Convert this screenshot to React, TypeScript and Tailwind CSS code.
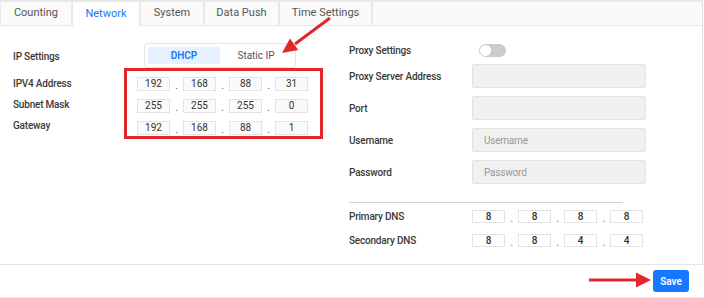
import { useState } from 'react';

type Tab = { name: string; w: string };

const tabs: Tab[] = [
  { name: 'Counting', w: 'w-[70px]' },
  { name: 'Network', w: 'w-[66px]' },
  { name: 'System', w: 'w-[62px]' },
  { name: 'Data Push', w: 'w-[73px]' },
  { name: 'Time Settings', w: 'w-[91px]' },
];

function IpFields({ parts, white }: { parts: string[]; white?: boolean }) {
  return (
    <div className="flex items-center">
      {parts.map((p, i) => (
        <div key={i} className="flex items-center">
          {i > 0 && (
            <span
              className={`w-[13px] h-full flex items-end justify-center pt-[5px] text-[10px] leading-none ${
                white ? 'text-[#5b9bd5]' : 'text-[#555]'
              }`}
            >
              .
            </span>
          )}
          <div
            className={`w-[33px] flex items-center justify-center border border-[#e3e3e3] text-[10px] text-[#333] leading-none ${
              white ? 'h-[13px] bg-white' : 'h-[14px] bg-[#fafafa]'
            }`}
          >
            {p}
          </div>
        </div>
      ))}
    </div>
  );
}

function TextBox({ placeholder }: { placeholder?: string }) {
  return (
    <div className="w-[174px] h-[24px] bg-[#f0f0f0] border border-[#e2e2e2] rounded-[2px] flex items-center pl-[11px] text-[10px] font-normal text-[#999]">
      {placeholder}
    </div>
  );
}

export default function App() {
  const [active, setActive] = useState('Network');
  const [mode, setMode] = useState<'dhcp' | 'static'>('dhcp');

  return (
    <div className="relative w-[704px] h-[298px] bg-white flex flex-col font-['Roboto',sans-serif] text-[#333]">
      <div className="w-[703px] h-[265px] border-r border-b border-[#e4e4e4] flex flex-col">
        {/* tabs */}
        <div className="h-[26px] shrink-0 bg-[#e8e8e8] pt-[2px] pl-px flex items-start gap-[2px]">
          {tabs.map((t) => (
            <button
              key={t.name}
              onClick={() => setActive(t.name)}
              className={`${t.w} flex items-center justify-center text-[11px] ${
                active === t.name ? 'h-[24px] bg-white text-[#1677ff]' : 'h-[23px] bg-[#fafafa] text-[#555]'
              }`}
            >
              {t.name}
            </button>
          ))}
          <div className="flex-1 h-[23px] bg-[#fafafa]" />
        </div>

        {/* body */}
        <div className="flex flex-1">
          <div className="w-[336px] pl-[13px] pt-[17px]">
            <div className="flex items-center h-[24px]">
              <span className="w-[131px] text-[10px] font-medium tracking-[-0.2px] text-[#3a3a3a] pt-[2px]">IP Settings</span>
              <div className="flex p-[3px] border border-[#e6e6e6] rounded-[3px]">
                <button
                  onClick={() => setMode('dhcp')}
                  className={`w-[72px] h-[17px] rounded-[2px] text-[10px] font-semibold ${
                    mode === 'dhcp' ? 'bg-[#e6f0ff] text-[#1677ff]' : 'text-[#555]'
                  }`}
                >
                  DHCP
                </button>
                <button
                  onClick={() => setMode('static')}
                  className={`w-[72px] h-[17px] rounded-[2px] text-[10px] ${
                    mode === 'static' ? 'bg-[#e6f0ff] text-[#1677ff] font-semibold' : 'text-[#555]'
                  }`}
                >
                  Static IP
                </button>
              </div>
            </div>

            <div className="flex mt-[1px]">
              <div className="w-[111px] pt-[8px] flex flex-col gap-[7px] text-[10px] font-medium tracking-[-0.2px] text-[#3a3a3a]">
                <span className="h-[14px] flex items-center">IPV4 Address</span>
                <span className="h-[14px] flex items-center">Subnet Mask</span>
                <span className="h-[15px] flex items-center">Gateway</span>
              </div>
              <div className="w-[199px] h-[71px] border-[3px] border-[#e3262a] pl-[10px] pt-[5px] flex flex-col gap-[7px]">
                <IpFields parts={['192', '168', '88', '31']} />
                <IpFields parts={['255', '255', '255', '0']} />
                <IpFields parts={['192', '168', '88', '1']} />
              </div>
            </div>
          </div>

          <div className="flex-1 pl-[13px] pt-[17px] text-[10px] font-medium tracking-[-0.2px] text-[#3a3a3a]">
            <div className="flex items-center h-[14px]">
              <span className="w-[130px]">Proxy Settings</span>
              <div className="w-[27px] h-[13px] rounded-full bg-[#cccccc] p-[1px] flex items-center">
                <div className="w-[11px] h-[11px] rounded-full bg-white" />
              </div>
            </div>
            <div className="mt-[7px] flex flex-col gap-[8px]">
              <div className="flex items-center">
                <span className="w-[123px]">Proxy Server Address</span>
                <TextBox />
              </div>
              <div className="flex items-center">
                <span className="w-[123px]">Port</span>
                <TextBox />
              </div>
              <div className="flex items-center">
                <span className="w-[123px]">Username</span>
                <TextBox placeholder="Username" />
              </div>
              <div className="flex items-center">
                <span className="w-[123px]">Password</span>
                <TextBox placeholder="Password" />
              </div>
            </div>
            <div className="mt-[18px] w-[274px] h-px bg-[#d0d0d0]" />
            <div className="mt-[6px] flex flex-col gap-[9px]">
              <div className="flex items-center">
                <span className="w-[123px]">Primary DNS</span>
                <IpFields parts={['8', '8', '8', '8']} white />
              </div>
              <div className="flex items-center">
                <span className="w-[123px]">Secondary DNS</span>
                <IpFields parts={['8', '8', '4', '4']} white />
              </div>
            </div>
          </div>
        </div>
      </div>

      {/* footer */}
      <div className="h-[33px] border-b border-[#e8e8e8] flex items-center justify-end pr-[15px]">
        <button className="w-[36px] h-[22px] rounded-[3px] bg-[#1677ff] text-white text-[10px] font-semibold">
          Save
        </button>
      </div>

      {/* annotation arrows */}
      <svg className="absolute inset-0 pointer-events-none" width="704" height="298">
        <line x1="330" y1="18" x2="295" y2="44" stroke="#e3262a" strokeWidth="3" />
        <polygon points="282,53 298.2,49.9 290,38.5" fill="#e3262a" />
        <line x1="589" y1="280" x2="637" y2="280" stroke="#e3262a" strokeWidth="3" />
        <polygon points="636,272.5 651,280 636,287.5" fill="#e3262a" />
      </svg>
    </div>
  );
}
